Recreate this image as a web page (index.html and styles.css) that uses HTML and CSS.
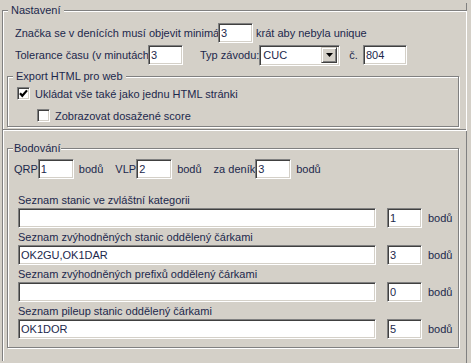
FILE: index.html
```html
<!DOCTYPE html>
<html lang="cs">
<head>
    <meta charset="UTF-8">
    <title>Nastavení</title>
    <link rel="stylesheet" href="styles.css">
</head>
<body>
    <div class="window">
        <fieldset class="group main">
            <legend>Nastavení</legend>
            <div class="row first">
                <span class="lbl w-minimum">Značka se v denících musí objevit minimálně</span>
                <input class="field w35" value="3">
                <span class="txt gap3">krát aby nebyla unique</span>
            </div>
            <div class="row second">
                <span class="lbl w-tolerance">Tolerance času (v minutách)</span>
                <input class="field w35" value="3">
                <span class="txt type-label">Typ závodu:</span>
                <div class="combo">
                    <span class="combo-value">CUC</span>
                    <span class="combo-btn">
                        <svg width="7" height="4" viewBox="0 0 7 4"><path d="M0 0h7L3.5 4z" fill="#000"/></svg>
                    </span>
                </div>
                <span class="txt number-label">č.</span>
                <input class="field w44" value="804">
            </div>

            <fieldset class="group export">
                <legend>Export HTML pro web</legend>
                <label class="check">
                    <span class="box">
                        <svg width="9" height="9" viewBox="0 0 9 9"><path d="M1 4.2l2.3 2.6L8 1.4" stroke="#000" stroke-width="2.2" fill="none"/></svg>
                    </span>
                    Ukládat vše také jako jednu HTML stránki
                </label>
                <label class="check sub">
                    <span class="box"></span>
                    Zobrazovat dosažené score
                </label>
            </fieldset>
        </fieldset>

        <div class="lower">
            <fieldset class="group scoring">
                <legend>Bodování</legend>
                <div class="row points">
                    <span class="txt">QRP</span>
                    <input class="field w36" value="1">
                    <span class="txt unit">bodů</span>
                    <span class="txt after">VLP</span>
                    <input class="field w36" value="2">
                    <span class="txt unit">bodů</span>
                    <span class="txt after">za deník</span>
                    <input class="field w36" value="3">
                    <span class="txt unit">bodů</span>
                </div>

                <div class="list">
                    <div class="list-label">Seznam stanic ve zvláštní kategorii</div>
                    <div class="list-row">
                        <input class="field wide" value="">
                        <input class="field w35" value="1">
                        <span class="txt">bodů</span>
                    </div>
                </div>
                <div class="list">
                    <div class="list-label">Seznam zvýhodněných stanic oddělený čárkami</div>
                    <div class="list-row">
                        <input class="field wide" value="OK2GU,OK1DAR">
                        <input class="field w35" value="3">
                        <span class="txt">bodů</span>
                    </div>
                </div>
                <div class="list">
                    <div class="list-label">Seznam zvýhodněných prefixů oddělený čárkami</div>
                    <div class="list-row">
                        <input class="field wide" value="">
                        <input class="field w35" value="0">
                        <span class="txt">bodů</span>
                    </div>
                </div>
                <div class="list">
                    <div class="list-label">Seznam pileup stanic oddělený čárkami</div>
                    <div class="list-row">
                        <input class="field wide" value="OK1DOR">
                        <input class="field w35" value="5">
                        <span class="txt">bodů</span>
                    </div>
                </div>
            </fieldset>
        </div>
    </div>
</body>
</html>
```

FILE: styles.css
```css
html {
    background-color: #d4d0c8;
}
body {
    margin: 0;
    font-family: "Liberation Sans", Arial, sans-serif;
    font-size: 11px;
    line-height: 14px;
    color: #1c284c;
}
.window {
    width: 467px;
    min-height: 363px;
    padding-left: 2px;
    box-sizing: border-box;
    border-right: 1px solid #808080;
}

/* etched group boxes */
.group {
    margin: 0;
    min-width: 0;
    border: 1px solid #808080;
    box-shadow: inset 1px 1px 0 #fff, 1px 1px 0 #fff;
}
.group legend {
    padding: 0 1px;
    background-color: #d4d0c8;
    line-height: 14px;
}
.main {
    margin-top: 3px;
    border-right: none;
    padding: 6px 0 2px 4px;
}
.main legend {
    margin-left: 1px;
    padding: 0 3px;
}
.export {
    width: 452px;
    box-sizing: border-box;
    margin-top: 4px;
    padding: 4px 0 4px 2px;
}
.export legend {
    margin-left: 3px;
}
.lower {
    border-left: 1px solid #808080;
    box-shadow: inset 1px 0 0 #fff;
    padding: 11px 0 0 4px;
    min-height: 220px;
}
.scoring {
    width: 452px;
    box-sizing: border-box;
    padding: 4px 0 8px 6px;
}
.scoring legend {
    margin-left: -1px;
}

/* rows */
.row {
    display: flex;
    align-items: center;
    height: 20px;
}
.row.first,
.row.second {
    margin-left: 8px;
}
.row.second {
    margin-top: 2px;
}
.lbl {
    white-space: nowrap;
    overflow: hidden;
}
.w-minimum {
    width: 203px;
}
.w-tolerance {
    width: 133px;
}
.gap3 {
    margin-left: 3px;
}
.type-label {
    margin-left: 17px;
}
.number-label {
    margin-left: 9px;
    margin-right: 5px;
}
.txt {
    white-space: nowrap;
}

/* sunken text fields */
.field {
    height: 20px;
    box-sizing: border-box;
    margin: 0;
    padding: 0 0 0 2px;
    border: 1px solid;
    border-color: #808080 #fff #fff #808080;
    box-shadow: inset 1px 1px 0 #404040, inset -1px -1px 0 #d4d0c8;
    background-color: #fff;
    font-family: "Liberation Sans", Arial, sans-serif;
    font-size: 11px;
    color: #1c284c;
    outline: none;
}
.w35 {
    width: 35px;
}
.w36 {
    width: 36px;
}
.w44 {
    width: 44px;
}
.wide {
    width: 358px;
}

.combo {
    display: flex;
    align-items: center;
    justify-content: space-between;
    width: 81px;
    height: 21px;
    box-sizing: border-box;
    padding: 2px 2px 2px 3px;
    border: 1px solid;
    border-color: #808080 #fff #fff #808080;
    box-shadow: inset 1px 1px 0 #404040, inset -1px -1px 0 #d4d0c8;
    background-color: #fff;
}
.combo-btn {
    display: flex;
    align-items: center;
    justify-content: center;
    width: 16px;
    height: 16px;
    box-sizing: border-box;
    background-color: #d4d0c8;
    border: 1px solid;
    border-color: #d4d0c8 #404040 #404040 #d4d0c8;
    box-shadow: inset 1px 1px 0 #fff, inset -1px -1px 0 #808080;
}

/* checkboxes */
.check {
    display: flex;
    align-items: center;
    gap: 5px;
    height: 13px;
    margin-left: 7px;
}
.check.sub {
    margin-top: 9px;
    margin-left: 27px;
}
.box {
    display: flex;
    align-items: center;
    justify-content: center;
    width: 13px;
    height: 13px;
    box-sizing: border-box;
    border: 1px solid;
    border-color: #808080 #fff #fff #808080;
    box-shadow: inset 1px 1px 0 #404040, inset -1px -1px 0 #d4d0c8;
    background-color: #fff;
}

/* scoring */
.points {
    height: 20px;
}
.unit {
    margin-left: 5px;
}
.after {
    margin-left: 12px;
}
.list {
    margin-left: 4px;
    margin-top: 2px;
}
.points + .list {
    margin-top: 14px;
}
.list-label {
    height: 15px;
    line-height: 15px;
}
.list-row {
    display: flex;
    align-items: center;
    gap: 11px;
}
.list-row .txt {
    margin-left: -5px;
}
```
